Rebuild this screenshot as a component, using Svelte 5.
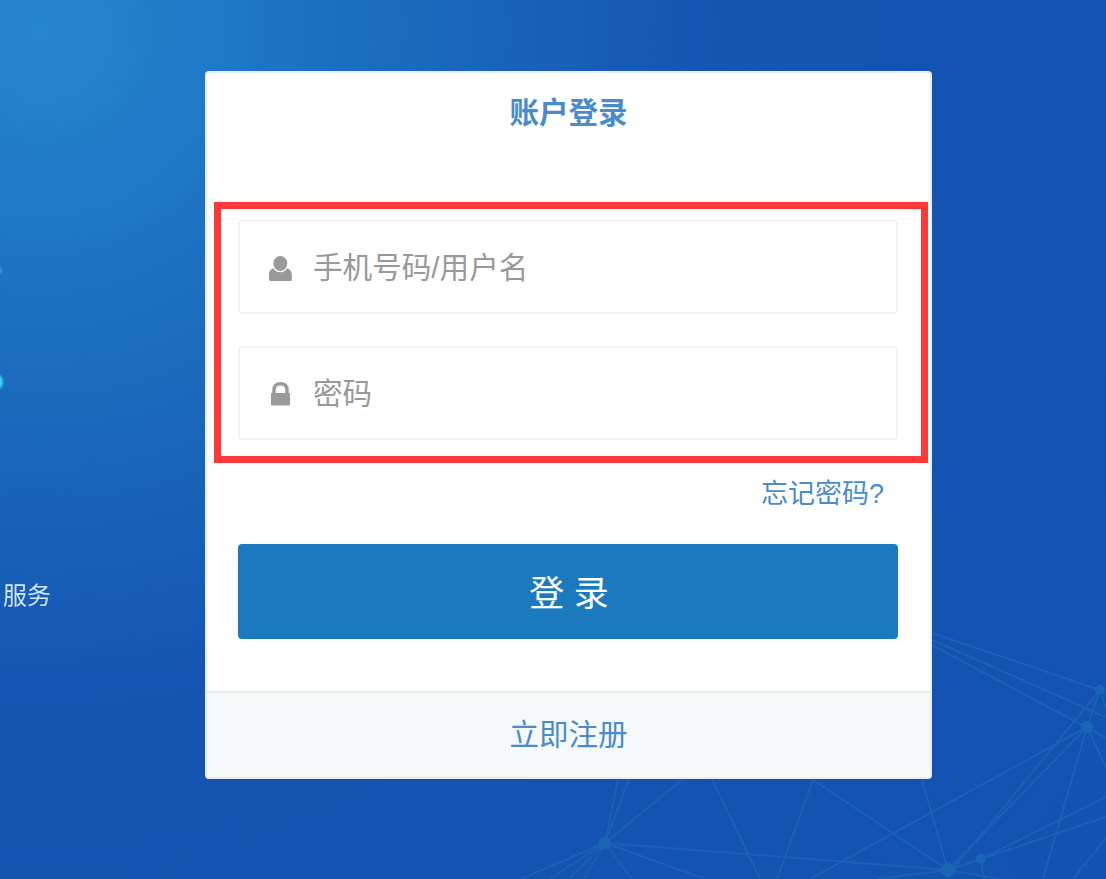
<script lang="ts">
  // faint network drawn behind the card
  const nodes = [
    [1087, 727, 6],
    [1100, 690, 5],
    [948, 870, 7],
    [981, 859, 5],
    [605, 843, 6],
  ];
  const lines = [
    [932, 633, 1100, 690],
    [932, 640, 1106, 717],
    [932, 645, 1106, 738],
    [1087, 727, 1100, 690],
    [1100, 690, 1106, 708],
    [1087, 727, 1106, 767],
    [1087, 727, 948, 870],
    [1100, 690, 952, 870],
    [1087, 727, 1043, 879],
    [1087, 727, 810, 879],
    [981, 859, 1106, 797],
    [981, 859, 1106, 817],
    [948, 870, 981, 859],
    [1106, 838, 1073, 879],
    [948, 870, 813, 780],
    [948, 870, 922, 780],
    [813, 780, 777, 879],
    [712, 779, 760, 879],
    [605, 843, 948, 870],
    [605, 843, 618, 779],
    [605, 843, 629, 779],
    [605, 843, 683, 779],
    [605, 843, 521, 879],
    [605, 843, 550, 879],
    [605, 843, 569, 879],
    [605, 843, 584, 879],
    [605, 843, 632, 879],
    [605, 843, 705, 879],
    [948, 870, 877, 879],
    [948, 870, 1000, 879],
    [981, 859, 984, 879],
  ];

  let username = $state("");
  let password = $state("");
</script>

<div class="page">
  <svg class="network" viewBox="0 0 1106 879" aria-hidden="true">
    {#each lines as [x1, y1, x2, y2]}
      <line {x1} {y1} {x2} {y2} />
    {/each}
    {#each nodes as [cx, cy, r]}
      <circle {cx} {cy} {r} />
    {/each}
  </svg>
  <span class="glow glow-a"></span>
  <span class="glow glow-b"></span>
  <div class="slogan">服务</div>

  <div class="card">
    <h2 class="title">账户登录</h2>

    <div class="fields">
      <label class="field">
        <svg class="icon" viewBox="0 0 24 26" aria-hidden="true">
          <ellipse cx="11.300" cy="7.500" rx="7" ry="7.500" />
          <path d="M0 23.500 V18.500 C0 14.800 2.500 12.600 4.600 12.200 C6 15.200 8.800 16.200 11.300 16.200 C13.800 16.200 16.600 15.200 18 12.200 C20.100 12.600 22.800 14.800 22.800 18.500 V23.500 Q22.800 25 21.300 25 H1.500 Q0 25 0 23.500 Z" />
        </svg>
        <input type="text" placeholder="手机号码/用户名" bind:value={username} />
      </label>
      <label class="field">
        <svg class="icon" viewBox="0 0 24 26" aria-hidden="true">
          <path class="shackle" d="M5 13 V8 C5 3.800 7.500 1.700 11.500 1.700 C15.500 1.700 18 3.800 18 8 V13" />
          <rect x="2" y="11" width="19" height="12.500" rx="1" />
        </svg>
        <input type="password" placeholder="密码" bind:value={password} />
      </label>
    </div>

    <div class="forgot"><a href="#forgot">忘记密码?</a></div>

    <button class="submit" type="button">登 录</button>

    <div class="footer"><a href="#register">立即注册</a></div>

    <div class="highlight"></div>
  </div>
</div>

<style>
  :global(body) {
    margin: 0;
  }

  .page {
    position: relative;
    width: 1106px;
    height: 879px;
    overflow: hidden;
    padding: 71px 0 0 205px;
    box-sizing: border-box;
    background: radial-gradient(circle at 40px 30px, #2686ce 0, #1c70c1 280px, #1455b2 680px, #1252b0 100%);
    font-family: "Liberation Sans", "Noto Sans CJK SC", sans-serif;
  }

  .network {
    position: absolute;
    inset: 0;
    width: 100%;
    height: 100%;
  }

  .network line {
    stroke: #1a60b5;
    stroke-width: 2;
  }

  .network circle {
    fill: #1a66b6;
  }

  .glow {
    position: absolute;
    background: #3fd4ee;
    border-radius: 50%;
    filter: blur(1px);
  }

  .glow-a {
    left: -5px;
    top: 267px;
    width: 7px;
    height: 7px;
    opacity: 0.5;
  }

  .glow-b {
    left: -7px;
    top: 375px;
    width: 10px;
    height: 14px;
  }

  .slogan {
    position: absolute;
    left: 3px;
    top: 581px;
    font-size: 24px;
    line-height: 30px;
    color: #d5e5f5;
    filter: blur(0.4px);
  }

  .card {
    position: relative;
    box-sizing: border-box;
    width: 727px;
    height: 708px;
    background: #fff;
    border: 2px solid #e9eef4;
    border-radius: 4px;
    display: flex;
    flex-direction: column;
    align-items: center;
  }

  .title {
    margin: 0;
    height: 147px;
    padding-top: 20px;
    box-sizing: border-box;
    font-size: 29.500px;
    line-height: 40px;
    font-weight: 700;
    color: #4a8bca;
  }

  .fields {
    display: flex;
    flex-direction: column;
    gap: 32px;
    width: 660px;
    margin-left: -1px;
  }

  .field {
    box-sizing: border-box;
    height: 94px;
    border: 2px solid #f3f3f3;
    border-radius: 4px;
    display: flex;
    align-items: center;
    padding-left: 29px;
    gap: 20px;
  }

  .icon {
    width: 24px;
    height: 26px;
    margin-top: 4px;
    flex-shrink: 0;
    fill: #999;
  }

  .shackle {
    fill: none;
    stroke: #999;
    stroke-width: 3.400;
  }

  .field input {
    flex: 1;
    min-width: 0;
    border: 0;
    outline: 0;
    padding: 2px 0 0;
    background: transparent;
    font: inherit;
    font-size: 29.600px;
    color: #555;
  }

  .field input::placeholder {
    color: #999;
    opacity: 1;
  }

  .forgot {
    box-sizing: border-box;
    width: 660px;
    margin-left: -1px;
    height: 104px;
    padding: 34px 14px 0 0;
    text-align: right;
    font-size: 27px;
    line-height: 40px;
  }

  a {
    color: #4a8bca;
    text-decoration: none;
  }

  .submit {
    width: 660px;
    margin-left: -1px;
    height: 95px;
    border: 0;
    border-radius: 4px;
    background: #1a7abd;
    color: #fff;
    font: inherit;
    font-size: 35px;
    padding: 0 0 2px 2px;
    flex-shrink: 0;
  }

  .footer {
    box-sizing: border-box;
    width: 100%;
    margin-top: 52px;
    flex: 1;
    background: #f6f9fa;
    border-top: 2px solid #e8edf1;
    display: flex;
    align-items: center;
    justify-content: center;
    font-size: 29.500px;
    padding-bottom: 7px;
  }

  /* annotation frame over the two inputs */
  .highlight {
    position: absolute;
    left: 7px;
    top: 129px;
    width: 714px;
    height: 261px;
    box-sizing: border-box;
    border: 7px solid #ff3838;
    pointer-events: none;
  }
</style>
